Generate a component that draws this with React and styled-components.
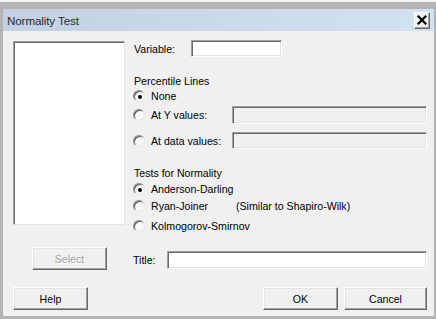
import React from 'react';
import styled, { createGlobalStyle } from 'styled-components';

const GlobalStyle = createGlobalStyle`
  html, body {
    margin: 0;
    padding: 0;
    overflow: hidden;
  }
  body {
    font-family: "Liberation Sans", Arial, sans-serif;
  }
`;

const Frame = styled.div`
  box-sizing: border-box;
  width: 436px;
  height: 319px;
  display: flex;
  flex-direction: column;
  background: #b4b4b4;
  border-top: 2px solid #f4f4f4;
  padding: 7px 2px 3px 3px;
`;

const TitleBar = styled.div`
  height: 22px;
  flex: none;
  display: flex;
  align-items: center;
  justify-content: space-between;
  padding: 0 4px 0 4px;
  background: linear-gradient(to right, #c1d1e3, #d3e2f0);
`;

const TitleText = styled.span`
  font-size: 11.6px;
  color: #1f2a38;
  letter-spacing: -0.1px;
`;

const CloseButton = styled.button`
  box-sizing: border-box;
  width: 16px;
  height: 17px;
  padding: 0;
  display: flex;
  align-items: center;
  justify-content: center;
  background: #f0f0f0;
  border: 1px solid;
  border-color: #fff #696969 #696969 #fff;
  box-shadow: inset -1px -1px 0 #a0a0a0;
`;

const Body = styled.div`
  flex: 1;
  background: #f0f0f0;
  padding: 10px 7px 6px 10px;
  display: grid;
  grid-template-columns: 112px 1fr;
  grid-template-rows: 184px auto auto;
  align-content: start;
  column-gap: 9px;
  font-size: 10.6px;
  color: #000;
`;

const ListBox = styled.div`
  box-sizing: border-box;
  background: #fff;
  border: 1px solid;
  border-color: #a0a0a0 #e3e3e3 #e3e3e3 #a0a0a0;
  box-shadow: inset 1px 1px 0 #696969;
`;

const Column = styled.div`
  display: flex;
  flex-direction: column;
  min-height: 0;
`;

const Row = styled.div`
  display: flex;
  align-items: center;
  height: ${p => p.$h || 14}px;
  margin-top: ${p => p.$mt || 0}px;
  flex: none;
`;

const Label = styled.span`
  width: ${p => (p.$w ? `${p.$w}px` : 'auto')};
  flex: none;
  white-space: nowrap;
`;

const TextBox = styled.div`
  box-sizing: border-box;
  height: ${p => p.$h || 18}px;
  width: ${p => (p.$w ? `${p.$w}px` : 'auto')};
  flex: ${p => (p.$w ? 'none' : 1)};
  background: ${p => (p.$disabled ? '#f0f0f0' : '#fff')};
  border: 1px solid;
  border-color: #a0a0a0 #fff #fff #a0a0a0;
  box-shadow: inset 1px 1px 0 #696969, inset -1px -1px 0 #e3e3e3;
`;

const RadioChoice = styled.label`
  display: flex;
  align-items: center;
  gap: 6px;
  width: ${p => (p.$w ? `${p.$w}px` : 'auto')};
  flex: none;
  margin-left: -1px;
  white-space: nowrap;
`;

const RadioDot = styled.span`
  box-sizing: border-box;
  width: 12px;
  height: 12px;
  border-radius: 50%;
  flex: none;
  display: flex;
  align-items: center;
  justify-content: center;
  background: #f7f7f7;
  border: 1px solid;
  border-color: #8a8a8a #e8e8e8 #e8e8e8 #8a8a8a;
  box-shadow: inset 1px 1px 0 #5a5a5a;

  &::after {
    content: '';
    width: 4px;
    height: 4px;
    border-radius: 50%;
    background: #000;
    display: ${p => (p.$checked ? 'block' : 'none')};
    margin: 1px 0 0 1px;
  }
`;

const Button = styled.button`
  box-sizing: border-box;
  width: ${p => p.$w || 75}px;
  height: 23px;
  padding: 0;
  font-family: "Liberation Sans", Arial, sans-serif;
  font-size: 10.6px;
  color: ${p => (p.disabled ? '#a0a0a0' : '#000')};
  text-shadow: ${p => (p.disabled ? '1px 1px 0 #fff' : 'none')};
  background: #f0f0f0;
  border: 1px solid;
  border-color: #fff #696969 #696969 #fff;
  box-shadow: inset -1px -1px 0 #a0a0a0, inset 1px 1px 0 #e3e3e3;
`;

const SelectCell = styled.div`
  display: flex;
  justify-content: center;
  padding-left: 1px;
  margin-top: 22px;
`;

const TitleRow = styled.div`
  display: flex;
  align-items: center;
  align-self: end;
  margin-bottom: 1px;
  margin-left: -1px;
`;

const Footer = styled.div`
  grid-column: 1 / -1;
  display: flex;
  align-items: center;
  gap: 6px;
  margin-top: 17px;
`;

const Spacer = styled.div`
  flex: 1;
`;

function Radio({ checked, width, children }) {
  return (
    <RadioChoice $w={width}>
      <RadioDot $checked={checked} />
      <span>{children}</span>
    </RadioChoice>
  );
}

export default function App() {
  return (
    <>
      <GlobalStyle />
      <Frame>
        <TitleBar>
          <TitleText>Normality Test</TitleText>
          <CloseButton aria-label="Close">
            <svg width="10" height="10" viewBox="0 0 10 10">
              <path d="M1.5 1.5 L8.5 8.5 M8.5 1.5 L1.5 8.5" stroke="#000" strokeWidth="2.2" strokeLinecap="square" />
            </svg>
          </CloseButton>
        </TitleBar>
        <Body>
          <ListBox />
          <Column>
            <Row $h={17} $mt={-1}>
              <Label $w={57}>Variable:</Label>
              <TextBox $w={91} $h={17} />
            </Row>
            <Row $mt={17}>
              <Label>Percentile Lines</Label>
            </Row>
            <Row $mt={1}>
              <Radio checked>None</Radio>
            </Row>
            <Row $h={18} $mt={3}>
              <Radio width={99}>At Y values:</Radio>
              <TextBox $disabled />
            </Row>
            <Row $h={17} $mt={8}>
              <Radio width={99}>At data values:</Radio>
              <TextBox $disabled $h={17} />
            </Row>
            <Row $mt={17}>
              <Label>Tests for Normality</Label>
            </Row>
            <Row $mt={2}>
              <Radio checked>Anderson-Darling</Radio>
            </Row>
            <Row $mt={3}>
              <Radio width={103}>Ryan-Joiner</Radio>
              <Label>(Similar to Shapiro-Wilk)</Label>
            </Row>
            <Row $mt={6}>
              <Radio>Kolmogorov-Smirnov</Radio>
            </Row>
          </Column>

          <SelectCell>
            <Button disabled>Select</Button>
          </SelectCell>
          <TitleRow>
            <Label $w={34}>Title:</Label>
            <TextBox />
          </TitleRow>

          <Footer>
            <Button>Help</Button>
            <Spacer />
            <Button>OK</Button>
            <Button $w={83}>Cancel</Button>
          </Footer>
        </Body>
      </Frame>
    </>
  );
}
